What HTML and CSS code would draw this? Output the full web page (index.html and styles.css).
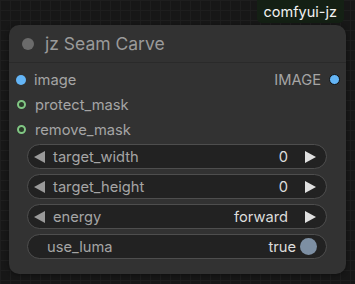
FILE: index.html
```html
<!DOCTYPE html>
<html>
<head>
<meta charset="utf-8">
<link rel="stylesheet" href="styles.css">
</head>
<body>
<div class="canvas">
  <div class="badge-row"><div class="badge">comfyui-jz</div></div>
  <div class="node">
    <div class="title"><span class="title-dot"></span><span class="title-text">jz Seam Carve</span></div>
    <div class="slots">
      <div class="slot-row">
        <div class="slot-in"><span class="dot dot-image"></span><span class="slot-label">image</span></div>
        <div class="slot-out"><span class="slot-label">IMAGE</span><span class="dot dot-image dot-out"></span></div>
      </div>
      <div class="slot-row">
        <div class="slot-in"><span class="dot dot-mask"></span><span class="slot-label">protect_mask</span></div>
      </div>
      <div class="slot-row">
        <div class="slot-in"><span class="dot dot-mask"></span><span class="slot-label">remove_mask</span></div>
      </div>
    </div>
    <div class="widgets">
      <div class="widget"><span class="arrow arrow-left"></span><span class="w-name">target_width</span><span class="w-value">0</span><span class="arrow arrow-right"></span></div>
      <div class="widget"><span class="arrow arrow-left"></span><span class="w-name">target_height</span><span class="w-value">0</span><span class="arrow arrow-right"></span></div>
      <div class="widget"><span class="arrow arrow-left"></span><span class="w-name">energy</span><span class="w-value">forward</span><span class="arrow arrow-right"></span></div>
      <div class="widget toggle"><span class="w-name">use_luma</span><span class="w-value">true</span><span class="knob"></span></div>
    </div>
  </div>
</div>
</body>
</html>
```

FILE: styles.css
```css
html, body {
  margin: 0;
  padding: 0;
}
body {
  width: 355px;
  height: 284px;
  overflow: hidden;
  background-color: #171717;
  background-image:
    linear-gradient(to right, #1e1e1e 1px, transparent 1px),
    linear-gradient(to bottom, #1e1e1e 1px, transparent 1px);
  background-size: 10px 10px;
  font-family: Inter, "Liberation Sans", Arial, sans-serif;
}
.canvas {
  display: flex;
  flex-direction: column;
}
.badge-row {
  display: flex;
  justify-content: flex-end;
  padding-right: 11px;
}
.badge {
  height: 23px;
  padding: 0 7px;
  background: #142014;
  color: #f2f2f2;
  font-size: 14.5px;
  line-height: 23px;
  border-radius: 0 0 5px 5px;
}
.node {
  margin: 2px 0 0 9px;
  width: 337px;
  height: 249px;
  background: #323232;
  border-radius: 10px;
  box-sizing: border-box;
  box-shadow: 0 1px 4px rgba(0,0,0,0.4);
}
.title {
  height: 38px;
  display: flex;
  align-items: center;
  padding-left: 13px;
  gap: 11px;
  border-bottom: 1px solid #2a2a2a;
  box-sizing: border-box;
}
.title-dot {
  width: 12px;
  height: 12px;
  border-radius: 50%;
  background: #6b6b6b;
}
.title-text {
  color: #9a9a9a;
  font-size: 17.5px;
}
.slots {
  padding-top: 4px;
  display: flex;
  flex-direction: column;
}
.slot-row {
  height: 25px;
  display: flex;
  align-items: center;
  justify-content: space-between;
}
.slot-in, .slot-out {
  display: flex;
  align-items: center;
}
.slot-in {
  padding-left: 7px;
  gap: 8px;
}
.slot-out {
  padding-right: 6px;
  gap: 8px;
}
.slot-label {
  color: #a5a5a5;
  font-size: 14.7px;
}
.dot {
  width: 10px;
  height: 10px;
  border-radius: 50%;
  box-sizing: border-box;
}
.dot-image {
  background: #64b5f6;
}
.dot-out {
  border: 1px solid #111;
  width: 11px;
  height: 11px;
}
.dot-mask {
  width: 9px;
  height: 9px;
  border: 2.5px solid #81c784;
  background: #2a3a2a;
  margin-left: 1px;
  margin-right: 1px;
}
.widgets {
  display: flex;
  flex-direction: column;
  gap: 5px;
  padding: 2px 19px 0 18px;
}
.widget {
  height: 25px;
  border: 1px solid #4e4e4e;
  border-radius: 13px;
  background: #222;
  box-sizing: border-box;
  display: flex;
  align-items: center;
  padding: 0 10px 0 6px;
  font-size: 14.7px;
}
.w-name {
  color: #a5a5a5;
  flex: 1;
  padding-left: 8px;
}
.w-value {
  color: #dcdcdc;
}
.arrow {
  width: 0;
  height: 0;
  border-top: 6px solid transparent;
  border-bottom: 6px solid transparent;
}
.arrow-left {
  border-right: 11px solid #9a9a9a;
}
.arrow-right {
  border-left: 11px solid #e0e0e0;
  margin-left: 17px;
}
.toggle {
  padding: 0 9px 0 14px;
}
.toggle .w-name {
  padding-left: 5px;
}
.knob {
  width: 17px;
  height: 17px;
  border-radius: 50%;
  background: #7d8fa3;
  margin-left: 4px;
}
```
